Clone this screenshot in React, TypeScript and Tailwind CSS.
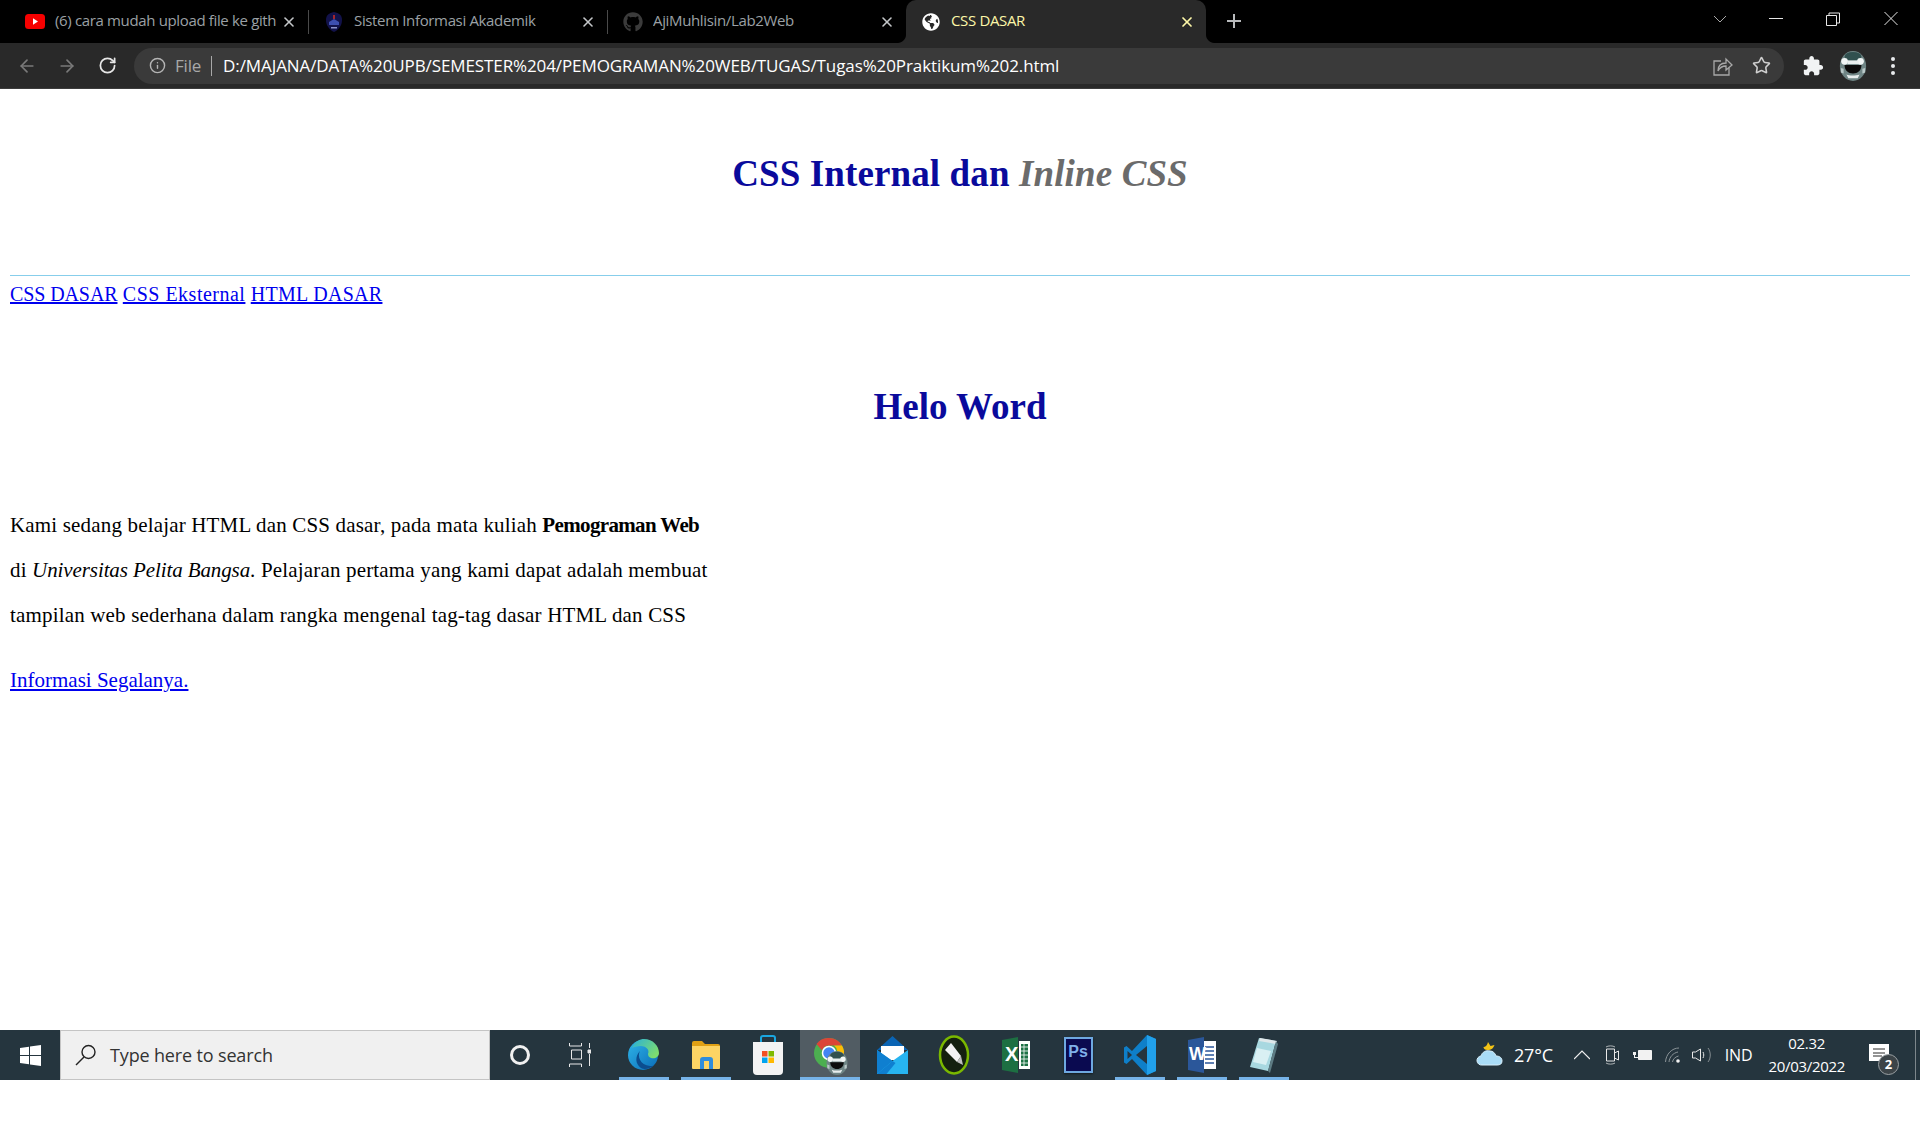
import { ArrowLeft, ArrowRight, Info, RotateCw, Star, X } from "lucide-react";
import { FaGithub, FaGlobeAmericas } from "react-icons/fa";

const uiFont = "font-['Open_Sans','Noto_Sans',sans-serif]";

const Avatar = ({ size }: { size: number }) => (
  <svg width={size} height={size} viewBox="0 0 28 32">
    <ellipse cx="14" cy="16" rx="14" ry="16" fill="#6f8585" />
    <ellipse cx="14" cy="6" rx="9" ry="5" fill="#31504f" />
    <circle cx="5" cy="11" r="3.6" fill="#f1f5f5" />
    <circle cx="22" cy="11" r="3.6" fill="#f1f5f5" />
    <rect x="8" y="10" width="12" height="4" fill="#e8eeee" />
    <path d="M5 15h18c0 6-4 9-9 9s-9-3-9-9z" fill="#0b0b0b" />
    <path d="M7 25c3 1.500 10 1.500 14 0l-2 4H9z" fill="#e8eeee" />
    <path d="M1 18l3 1v5l-3-1zM27 18l-3 1v5l3-1z" fill="#b9c8c8" />
  </svg>
);

const YoutubeIcon = () => (
  <svg width="20" height="15" viewBox="0 0 20 15">
    <rect width="20" height="15" rx="3.5" fill="#f60000" />
    <path d="M8 4.3l5 3.2-5 3.2z" fill="#fff" />
  </svg>
);

const CampusIcon = () => (
  <svg width="18" height="20" viewBox="0 0 18 20">
    <path d="M9 0c5 1 8 3 8 8 0 6-4 10-8 12-4-2-8-6-8-12C1 3 4 1 9 0z" fill="#12124a" />
    <path d="M8 3h2v4H8z" fill="#a3262c" />
    <path d="M4 10l5-3 5 3v3H4z" fill="#3d4fb0" />
    <path d="M6 15h6v1.500H6z" fill="#8b93c9" />
  </svg>
);

type TabProps = {
  icon: React.ReactNode;
  title: string;
  width: string;
  left: string;
  separator?: boolean;
};

const Tab = ({ icon, title, width, left, separator }: TabProps) => (
  <div className={`${width} ${left} h-[43px] flex items-center pr-[11px]`}>
    <div className="w-5 flex justify-center shrink-0">{icon}</div>
    <div className="ml-[10px] flex-1 overflow-hidden whitespace-nowrap text-[15px] tracking-[-0.35px] text-[#9ba0a5] -mt-[2px]">
      {title}
    </div>
    <X size={16} strokeWidth={2.4} className="text-[#c4c7c9] ml-1 shrink-0" />
    {separator && <div className="w-px h-[24px] bg-[#4a4a4a] ml-[11px] -mr-[11px] shrink-0" />}
  </div>
);

const TabStrip = () => (
  <div className={`h-[43px] bg-black flex ${uiFont}`}>
    <div className="w-2" />
    <Tab width="w-[301px]" left="pl-[17px]" icon={<YoutubeIcon />} title="(6) cara mudah upload file ke github" separator />
    <Tab width="w-[299px]" left="pl-[15px]" icon={<CampusIcon />} title="Sistem Informasi Akademik" separator />
    <Tab width="w-[298px]" left="pl-[15px]" icon={<FaGithub size={20} className="text-[#3b3b3b]" />} title="AjiMuhlisin/Lab2Web" />
    <div className="relative w-[300px] h-[43px] bg-[#292929] rounded-t-[10px] flex items-center pl-[15px] pr-[11px]">
      <svg className="absolute -left-2 bottom-0" width="8" height="8" viewBox="0 0 8 8">
        <path d="M8 0v8H0c4 0 8-4 8-8z" fill="#292929" />
      </svg>
      <svg className="absolute -right-2 bottom-0" width="8" height="8" viewBox="0 0 8 8">
        <path d="M0 0v8h8C4 8 0 4 0 0z" fill="#292929" />
      </svg>
      <div className="w-5 flex justify-center">
        <FaGlobeAmericas size={18} className="text-white" />
      </div>
      <div className="ml-[10px] flex-1 text-[15px] tracking-[-0.35px] text-[#fdf7a8] -mt-[2px]">CSS DASAR</div>
      <X size={16} strokeWidth={2.6} className="text-[#fdf7a8]" />
    </div>
    <div className="w-[19px]" />
    <svg width="18" height="43" viewBox="0 0 18 43">
      <path d="M9 14v14M2 21h14" stroke="#b8babc" strokeWidth="2" />
    </svg>
    <div className="flex-1" />
    <svg width="14" height="43" viewBox="0 0 14 43" className="mr-[42px]">
      <path d="M1 16l6 6 6-6" stroke="#a9a9a9" fill="none" />
    </svg>
    <svg width="14" height="43" viewBox="0 0 14 43" className="mr-[43px]">
      <path d="M0 18.500h14" stroke="#e6e6e6" />
    </svg>
    <svg width="14" height="43" viewBox="0 0 14 43" className="mr-[44px]">
      <path d="M.5 15.500h10v10H.5zM3 15V13h10.500v10H11" stroke="#e6e6e6" fill="none" />
    </svg>
    <svg width="14" height="43" viewBox="0 0 14 43" className="mr-[22px]">
      <path d="M.5 12l13 13M13.500 12l-13 13" stroke="#e6e6e6" fill="none" />
    </svg>
  </div>
);

const Toolbar = () => (
  <div className={`h-[46px] bg-[#292929] border-b border-[#3c3c3c] flex items-center ${uiFont}`}>
    <ArrowLeft size={20} className="ml-[17px] text-[#7a7a7a]" />
    <ArrowRight size={20} className="ml-[20px] text-[#7a7a7a]" />
    <RotateCw size={19} strokeWidth={2.2} className="ml-[21px] text-[#e6e6e6]" />
    <div className="ml-[17px] w-[1650px] h-[36px] rounded-full bg-[#3a3a3a] flex items-center">
      <Info size={17} className="ml-[15px] text-[#b4b4b4]" />
      <span className="ml-[9px] text-[17px] tracking-[-0.2px] text-[#a8a8a8]">File</span>
      <div className="w-px h-[20px] bg-[#a8a8a8] ml-[10px]" />
      <span className="ml-[11px] text-[17px] tracking-[-0.1px] text-white whitespace-nowrap">
        D:/MAJANA/DATA%20UPB/SEMESTER%204/PEMOGRAMAN%20WEB/TUGAS/Tugas%20Praktikum%202.html
      </span>
      <div className="flex-1" />
      <svg width="20" height="21" viewBox="0 0 20 21" fill="none" stroke="#a8a8a8" strokeWidth="1.300" className="mr-[19px]">
        <path d="M16 13v7H1V6h7" />
        <path d="M5 16c0-5 3-8 8-8V4l6 6-6 5v-4c-4 0-6 1-8 5z" />
      </svg>
      <Star size={19} strokeWidth={2} className="mr-[13px] text-[#cfcfcf]" />
    </div>
    <svg width="22" height="22" viewBox="0 0 24 24" fill="#f1f3f4" className="ml-[18px]">
      <path d="M20.500 11H19V7c0-1.100-.9-2-2-2h-4V3.500C13 2.120 11.880 1 10.500 1S8 2.120 8 3.500V5H4c-1.100 0-1.990.9-1.990 2v3.800H3.500c1.490 0 2.700 1.210 2.700 2.700s-1.210 2.700-2.700 2.700H2V20c0 1.100.9 2 2 2h3.800v-1.500c0-1.490 1.210-2.700 2.700-2.700 1.490 0 2.700 1.210 2.700 2.700V22H17c1.100 0 2-.9 2-2v-4h1.500c1.380 0 2.500-1.120 2.500-2.500S21.880 11 20.500 11z" />
    </svg>
    <div className="ml-[14px]">
      <Avatar size={30} />
    </div>
    <svg width="4" height="20" viewBox="0 0 4 20" className="ml-[23px]">
      <circle cx="2" cy="3" r="2" fill="#e8eaed" />
      <circle cx="2" cy="10" r="2" fill="#e8eaed" />
      <circle cx="2" cy="17" r="2" fill="#e8eaed" />
    </svg>
  </div>
);

const Page = () => (
  <main className="h-[941px] bg-white px-[10px] font-['Liberation_Serif',serif]">
    <h1 className="pt-[63px] h-[186px] text-center text-[37px] leading-[44px] tracking-[0.12px] font-bold text-[#0a0a9c]">
      CSS Internal dan <em className="text-[#6b6b6b]">Inline CSS</em>
    </h1>
    <hr className="border-0 h-px bg-[#87ceeb]" />
    <nav className="mt-[6px] h-[24px] text-[20px] leading-[24px] tracking-[0.3px] text-[#0000ee]">
      <a href="#" className="underline tracking-[-0.1px]">CSS DASAR</a>{" "}
      <a href="#" className="underline tracking-[0.5px]">CSS Eksternal</a>{" "}
      <a href="#" className="underline">HTML DASAR</a>
    </nav>
    <h2 className="mt-[79px] text-center text-[37px] leading-[44px] font-bold text-[#0a0a9c]">Helo Word</h2>
    <p className="mt-[74px] text-[21px] leading-[45px] tracking-[0.17px] text-black">
      Kami sedang belajar HTML dan CSS dasar, pada mata kuliah <b className="tracking-[-0.65px]">Pemograman Web</b>
      <br />
      di <i className="tracking-[-0.1px]">Universitas Pelita Bangsa</i>. Pelajaran pertama yang kami dapat adalah membuat
      <br />
      tampilan web sederhana dalam rangka mengenal tag-tag dasar HTML dan CSS
    </p>
    <p className="mt-[20px] text-[21px] leading-[45px]">
      <a href="#" className="text-[#0000ee] underline">
        Informasi Segalanya.
      </a>
    </p>
  </main>
);

const EdgeIcon = () => (
  <svg width="32" height="34" viewBox="0 0 32 34">
    <defs>
      <linearGradient id="edgeA" x1="0" y1="0" x2="1" y2="1">
        <stop offset="0" stopColor="#2fb5e8" />
        <stop offset="1" stopColor="#0a6cb8" />
      </linearGradient>
      <linearGradient id="edgeB" x1="0" y1="0" x2="1" y2="0.6">
        <stop offset="0" stopColor="#29b0d8" />
        <stop offset="1" stopColor="#7ddc6f" />
      </linearGradient>
    </defs>
    <circle cx="15" cy="17" r="15" fill="url(#edgeA)" />
    <path d="M4 10C7 3 12 1 16 1c9 0 15 7 15 14 0 4-4 6-8 5-2-1-3-2-3-4 2-5-3-8-7-8-4 0-7 1-9 2z" fill="url(#edgeB)" />
    <path d="M12 13c-3 5 0 14 10 15 2 0 3 0 4-1-4 4-10 5-13 3-6-4-6-12-1-17z" fill="#0c4d8f" />
  </svg>
);

const FolderIcon = () => (
  <svg width="28" height="30" viewBox="0 0 28 30">
    <path d="M0 3a2 2 0 012-2h8l3 3h13a2 2 0 012 2v4H0z" fill="#e0a014" />
    <path d="M0 6h28v22a1 1 0 01-1 1H1a1 1 0 01-1-1z" fill="#fdd464" />
    <path d="M8 29v-9a3 3 0 013-3h7a3 3 0 013 3v9h-4v-8h-5v8z" fill="#2f8ddc" />
  </svg>
);

const StoreIcon = () => (
  <svg width="30" height="42" viewBox="0 0 30 42">
    <path d="M8 10V4a2 2 0 012-2h10a2 2 0 012 2v6" fill="none" stroke="#1aa6e0" strokeWidth="2" />
    <path d="M0 8h30v29a4 4 0 01-4 4H4a4 4 0 01-4-4z" fill="#f3f3f3" />
    <path d="M9 17h5.500v5.500H9z" fill="#f25022" />
    <path d="M15.500 17H21v5.500h-5.500z" fill="#7fba00" />
    <path d="M9 23.500h5.500V29H9z" fill="#00a4ef" />
    <path d="M15.500 23.500H21V29h-5.500z" fill="#ffb900" />
  </svg>
);

const ChromeIcon = () => (
  <div className="relative w-8 h-[34px]">
    <svg width="30" height="30" viewBox="0 0 30 30" className="absolute left-0 top-0">
      <circle cx="15" cy="15" r="15" fill="#4caf50" />
      <path d="M15 0a15 15 0 0113 7.500H15a7.500 7.500 0 00-7 5L2.500 6A15 15 0 0115 0z" fill="#db4437" />
      <path d="M28 7.500A15 15 0 0115 30l6-11a7.500 7.500 0 00-1-11.500z" fill="#fbbc05" />
      <circle cx="15" cy="15" r="6.500" fill="#4285f4" stroke="#fff" strokeWidth="1.500" />
    </svg>
    <div className="absolute left-[11px] top-[13px]">
      <Avatar size={24} />
    </div>
  </div>
);

const MailIcon = () => (
  <svg width="31" height="38" viewBox="0 0 31 38">
    <path d="M0 14L15.500 0 31 14z" fill="#0a64b4" />
    <path d="M4 10h23v14H4z" fill="#fff" />
    <path d="M0 14l15.500 11L31 14v24H0z" fill="#27b4f0" />
    <path d="M0 38l15.500-13L0 14z" fill="#0f7fd0" />
    <path d="M0 38l15.500-13 3 2-9 11z" fill="#0f7fd0" />
  </svg>
);

const PenIcon = () => (
  <svg width="32" height="40" viewBox="0 0 32 40">
    <ellipse cx="16" cy="20" rx="14" ry="18.500" fill="#14200f" stroke="#7ab800" strokeWidth="2.500" />
    <path d="M7 15l6-7 10 13-4 6z" fill="#f2f2f2" />
    <path d="M19 27l4-6 2 9z" fill="#bfbfbf" />
  </svg>
);

const ExcelIcon = () => (
  <div className="relative w-[28px] h-[36px]">
    <svg width="28" height="36" viewBox="0 0 28 36" className="absolute inset-0">
      <path d="M17 4h11v28H17z" fill="#fff" />
      <path d="M19 7h7v22h-7z" fill="#1e7145" />
      <path d="M19 10h7M19 14h7M19 18h7M19 22h7M19 26h7M22 7v22" stroke="#fff" strokeWidth=".8" />
      <path d="M0 3l16-3v36L0 33z" fill="#1d6f42" />
    </svg>
    <span className="absolute left-[3px] top-[5px] font-['Liberation_Sans',sans-serif] text-[20px] leading-[24px] font-bold text-white">
      X
    </span>
  </div>
);

const PsIcon = () => (
  <div className="w-[29px] h-[36px] bg-[#0a0a50] border-2 border-[#6ea8e0] flex items-start justify-center pt-[3px] font-['Liberation_Sans',sans-serif] text-[16px] leading-[20px] font-bold text-[#7fb0ea] shadow-[0_1px_2px_rgba(0,0,0,0.5)]">
    Ps
  </div>
);

const VscodeIcon = () => (
  <svg width="32" height="40" viewBox="0 0 32 40">
    <path d="M23 0l9 4v32l-9 4L8 24 2.500 29 0 27.500V12.500L2.500 11 8 16z" fill="#0e7fc9" />
    <path d="M23 0l9 4v32l-9 4z" fill="#21a0ea" />
    <path d="M23 11L12 20l11 9z" fill="#26343e" />
    <path d="M3.500 16L8 20l-4.500 4z" fill="#26343e" />
  </svg>
);

const WordIcon = () => (
  <div className="relative w-[28px] h-[36px]">
    <svg width="28" height="36" viewBox="0 0 28 36" className="absolute inset-0">
      <path d="M15 4h13v28H15z" fill="#fff" />
      <path d="M17 10h9M17 14h9M17 18h9M17 22h9M17 26h9" stroke="#2b579a" strokeWidth="1.600" />
      <path d="M0 3l16-3v36L0 33z" fill="#2b579a" />
    </svg>
    <span className="absolute left-[1px] top-[6px] font-['Liberation_Sans',sans-serif] text-[18px] leading-[22px] font-bold text-white">
      W
    </span>
  </div>
);

const NotepadIcon = () => (
  <svg width="30" height="38" viewBox="0 0 30 38">
    <path d="M10 2l17 3-8 30L1 31z" fill="#a8d8e0" />
    <path d="M11 2l17 3-1 3-17-3z" fill="#dfe8ea" />
    <path d="M27 5l2 3-8 29-2-2z" fill="#5d7c84" />
    <path d="M8 12l14 3-5 14-13-3z" fill="#d9f0f3" />
  </svg>
);

type AppItem = { name: string; icon: React.ReactNode; open?: boolean; active?: boolean };

const apps: AppItem[] = [
  { name: "edge", icon: <EdgeIcon />, open: true },
  { name: "explorer", icon: <FolderIcon />, open: true },
  { name: "store", icon: <StoreIcon /> },
  { name: "chrome", icon: <ChromeIcon />, open: true, active: true },
  { name: "mail", icon: <MailIcon /> },
  { name: "pen", icon: <PenIcon /> },
  { name: "excel", icon: <ExcelIcon /> },
  { name: "photoshop", icon: <PsIcon /> },
  { name: "vscode", icon: <VscodeIcon />, open: true },
  { name: "word", icon: <WordIcon />, open: true },
  { name: "notepad", icon: <NotepadIcon />, open: true },
];

const Taskbar = () => (
  <div className={`h-[50px] bg-[#25353e] flex items-stretch text-white ${uiFont}`}>
    <div className="w-[60px] flex items-center justify-center">
      <svg width="21" height="21" viewBox="0 0 21 21" fill="#fff">
        <path d="M0 3l9-1.300V10H0zM10 1.500L21 0v10H10zM0 11h9v8.300L0 18zM10 11h11v10l-11-1.500z" />
      </svg>
    </div>
    <div className="w-[430px] bg-[#f0f0f0] border border-[#c4c4c4] flex items-center text-[#333] text-[18px] tracking-[-0.15px]">
      <svg width="22" height="22" viewBox="0 0 22 22" fill="none" stroke="#222" strokeWidth="1.400" className="ml-[14px]">
        <circle cx="13.500" cy="8" r="6.500" />
        <path d="M9 13l-8 8" />
      </svg>
      <span className="ml-[13px]">Type here to search</span>
    </div>
    <div className="w-[60px] flex items-center justify-center">
      <div className="w-[20px] h-[20px] rounded-full border-[3px] border-[#f0f0f0]" />
    </div>
    <div className="w-[60px] flex items-center justify-center">
      <svg width="22" height="24" viewBox="0 0 22 24" fill="none" stroke="#e8e8e8">
        <path d="M.5 0v3h12V0M2.500 7h10v9h-10zM.5 24v-3h12v3M20.500 0v5M20.500 11v12" />
        <path d="M19 7h3v3h-3z" fill="#e8e8e8" />
      </svg>
    </div>
    <div className="w-[4px]" />
    <div className="flex items-stretch gap-[2px]">
      {apps.map((app) => (
        <div
          key={app.name}
          className={`w-[60px] relative flex items-center justify-center ${app.active ? "bg-[#515c63]" : ""}`}
        >
          {app.icon}
          {app.open && (
            <div className={`absolute bottom-0 h-[3px] bg-[#76b3e8] ${app.active ? "inset-x-0" : "inset-x-[5px]"}`} />
          )}
        </div>
      ))}
    </div>
    <div className="flex-1" />
    <svg width="28" height="50" viewBox="0 0 28 50" className="mr-[10px]">
      <path d="M12 12l2.500 4 4-1c-1 3-3 5-7 5-3 0-4-2-4-3 2 0 4-2 4.500-5z" fill="#f3c316" />
      <path d="M6 35a4.500 4.500 0 01-1-9c1-4 5-6 9-5 3 0 5 2 6 5 4 0 6 2 6 5s-2 4-5 4z" fill="#a9dcf7" stroke="#d7effb" />
    </svg>
    <div className="flex items-center text-[18px] tracking-[-0.2px] mr-[21px]">27°C</div>
    <svg width="16" height="50" viewBox="0 0 16 50" fill="none" stroke="#f2f2f2" strokeWidth="1.200" className="mr-[15px]">
      <path d="M0 29l8-8 8 8" />
    </svg>
    <svg width="14" height="50" viewBox="0 0 14 50" fill="none" stroke="#e8e8e8" className="mr-[14px]">
      <path d="M1.500 19h8v12h-8zM9.500 23l4-2v9l-4-2" />
      <path d="M1 17c2-1.500 7-1.500 9 0M1 33c2 1.500 7 1.500 9 0" strokeOpacity=".7" />
    </svg>
    <svg width="20" height="50" viewBox="0 0 20 50" className="mr-[12px]">
      <path d="M0 22h3v3H0zM1 25h1v2h3v1H1z" fill="#f2f2f2" />
      <path d="M5.500 20.500h13v9h-13z" fill="#f2f2f2" stroke="#f2f2f2" />
    </svg>
    <svg width="16" height="50" viewBox="0 0 16 50" fill="none" stroke="#8a9397" className="mr-[11px]">
      <path d="M.5 32C1 24 7 18 14 18M4 32c.5-5 4-9 9-10M7.500 32c.5-3 2.500-5 6-6" />
      <circle cx="13" cy="31" r="1.800" fill="#f2f2f2" stroke="none" />
    </svg>
    <svg width="20" height="50" viewBox="0 0 20 50" fill="none" stroke="#e8e8e8" className="mr-[13px]">
      <path d="M.5 22h3l5-3v12l-5-3h-3z" />
      <path d="M11 22c1 2 1 4 0 6" />
      <path d="M16 18c3 4 3 10 0 14" strokeOpacity=".5" />
    </svg>
    <div className="flex items-center text-[16px] tracking-[-0.2px] mr-[16px]">IND</div>
    <div className="flex flex-col items-center justify-center text-[15px] leading-[23px] tracking-[-0.3px] mr-[24px]">
      <span>02.32</span>
      <span>20/03/2022</span>
    </div>
    <div className="relative w-[24px] flex items-center">
      <svg width="20" height="20" viewBox="0 0 20 20" className="-mt-[3px]">
        <path d="M0 0h20v17H0z" fill="#fff" />
        <path d="M4 5h12M4 9h12M4 12h9" stroke="#2a2a2a" />
      </svg>
      <div className="absolute left-[9px] top-[24px] w-[21px] h-[21px] rounded-full bg-[#3c4448] border border-[#9aa0a3] flex items-center justify-center text-[13px] font-bold leading-none">
        2
      </div>
    </div>
    <div className="w-[22px]" />
    <div className="w-px bg-[#7d868b]" />
    <div className="w-[4px]" />
  </div>
);

export default function App() {
  return (
    <div className="w-full h-[1124px] bg-white overflow-hidden">
      <TabStrip />
      <Toolbar />
      <Page />
      <Taskbar />
    </div>
  );
}
